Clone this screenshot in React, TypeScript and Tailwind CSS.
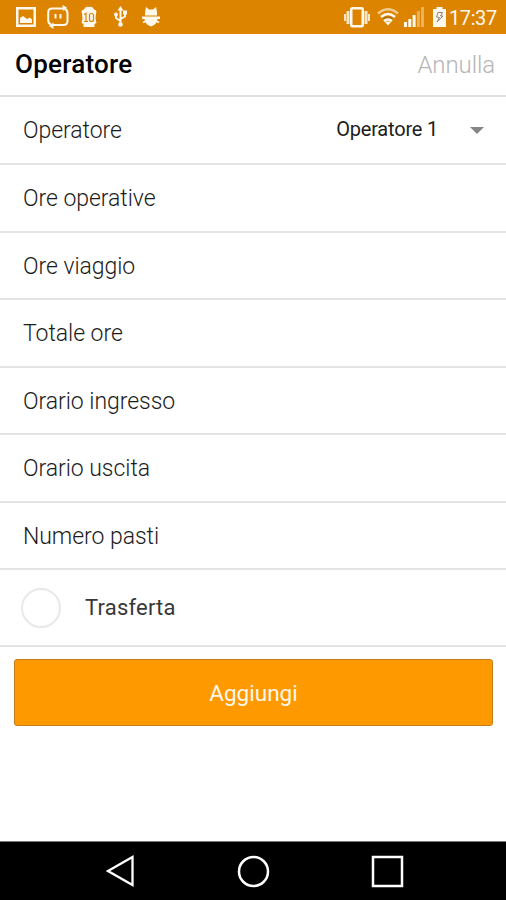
import React, { Component } from "react";

type Field = { id: string, label: string, height: string }

type OperatorFormState = {
    operator: string,
    trasferta: boolean
}

const FIELDS: Field[] = [
    { id: "oreOperative", label: "Ore operative", height: "h-[68px]" },
    { id: "oreViaggio", label: "Ore viaggio", height: "h-[67px]" },
    { id: "totaleOre", label: "Totale ore", height: "h-[68px]" },
    { id: "orarioIngresso", label: "Orario ingresso", height: "h-[67px]" },
    { id: "orarioUscita", label: "Orario uscita", height: "h-[68px]" },
    { id: "numeroPasti", label: "Numero pasti", height: "h-[67px]" },
];

const ROW = "flex shrink-0 items-center border-b-2 border-[#e4e4e4] pl-[23px]";
const LABEL = "pt-[3px] text-[23px] font-light tracking-[-0.050px] text-[#1c1c1c]";

function StatusBar() {
    return (
        <div className="flex h-[34px] shrink-0 items-center bg-[#dc8400] pr-[9px] pl-4 text-[#fff8ec]">
            <svg className="mr-[11px]" width="20" height="20" viewBox="0 0 20 20" fill="currentColor">
                <path fillRule="evenodd" d="M0 0h20v20H0zM2.500 2.500v15h15v-15z" />
                <path d="M4 16v-5l3-2 4 3 3-1.500 2 2V16z" />
            </svg>
            <svg className="mr-[12px]" width="22" height="24" viewBox="0 0 22 24" fill="none" stroke="currentColor" strokeWidth="2">
                <path d="M17 3.500H5.200q-4 0-4 4V15q0 3.500 3 5M5 20h11.500q4 0 4-4V8.500q0-3.500-3-5" />
                <path d="M15.500 0l4.500 2.500-4 3.500zM6.500 17.500L2 21l4.500 3z" fill="currentColor" stroke="none" />
                <path d="M8.500 9v4.500M13.500 9v4.500" />
            </svg>
            <svg className="mr-[17px]" width="16" height="22" viewBox="0 0 16 22">
                <path d="M1 7Q-.5 4 3 3.500 4 0 8 1q4-1 5 2.500 3.500.5 2 3.500l-.5 6 1 4-2 1v3H2.500v-3l-2-1 1-4z" fill="currentColor" />
                <path d="M3 8.500l2-1v8M3 15.500h4M8.500 9.500q0-2 2-2t2 2v4q0 2-2 2t-2-2z" fill="none" stroke="#dc8400" strokeWidth="1.200" />
            </svg>
            <svg className="mr-[15px]" width="13" height="22" viewBox="0 0 13 22" fill="none" stroke="currentColor" strokeWidth="2">
                <path d="M6.500 3v15M6.500 15L2 12V8.500M6.500 13L11 10.500V7" />
                <path d="M6.500 0l3 4.500h-6zM9 4.500h4v4H9z" fill="currentColor" stroke="none" />
                <circle cx="2" cy="8.500" r="2" fill="currentColor" stroke="none" />
                <circle cx="6.500" cy="18.500" r="2.300" fill="currentColor" stroke="none" />
            </svg>
            <svg width="18" height="20" viewBox="0 0 18 20" fill="currentColor">
                <path d="M3 8.500V5L4 0l3 2.500h4L14 0l1 5v3.500zM0 9.500h18V12h-2.500Q15 17.500 9 19.500 3 17.500 2.500 12H0z" />
                <path d="M1 15.500l3-1.500M17 15.500L14 14" stroke="currentColor" strokeWidth="1.800" />
            </svg>
            <svg className="ml-auto mr-[7px]" width="26" height="21" viewBox="0 0 26 21" fill="none" stroke="currentColor">
                <rect x="7.250" y="1.250" width="11.500" height="18" rx="1" strokeWidth="2.500" />
                <path d="M4 4v13M22 4v13" strokeWidth="3" opacity=".85" />
                <path d="M1 7v7M25 7v7" strokeWidth="2" opacity=".85" />
            </svg>
            <svg className="mr-[5px]" width="22" height="18" viewBox="0 0 22 18" fill="none" stroke="currentColor" strokeWidth="2.500">
                <path d="M1 5.500Q11-3 21 5.500" opacity=".6" />
                <path d="M4 9Q11 3 18 9" />
                <path d="M6.500 10.500Q11 7.500 15.500 10.500" stroke="#8a6430" strokeWidth="1.200" />
                <path d="M7 13Q11 10 15 13" />
                <path d="M11 17.500l-3.500-4h7z" fill="currentColor" stroke="none" />
            </svg>
            <svg className="mr-[9px]" width="20" height="20" viewBox="0 0 20 20" fill="currentColor">
                <path d="M0 15h3v5H0zM4.300 12h3v8h-3zM8.600 8h3v12h-3z" />
                <path d="M12.900 4h3v16h-3zM17 0h3v20h-3z" opacity=".4" />
            </svg>
            <svg className="mr-[3px]" width="13" height="20" viewBox="0 0 13 20">
                <path d="M0 2h3.500V0h6v2H13v18H0z" fill="currentColor" />
                <path d="M9.500 5.500H5L3.500 10l3 .5L4 15l6-6H7.500z" fill="none" stroke="#8c8377" strokeWidth="1" />
            </svg>
            <span className="mt-[2px] w-[48px] text-[20px] leading-none tracking-[-0.4px] whitespace-nowrap">17:37</span>
        </div>
    );
}

function NavigationBar() {
    return (
        <div className="flex h-[59px] shrink-0 items-center border-t border-[#777777] bg-black pl-[106px]">
            <svg width="29" height="32" viewBox="0 0 29 32" fill="none" stroke="white" strokeWidth="2.300">
                <path d="M2 16L26.500 2v28z" />
            </svg>
            <svg className="ml-[102px]" width="33" height="33" viewBox="0 0 33 33" fill="none" stroke="white" strokeWidth="2.500">
                <circle cx="16.500" cy="16.500" r="14.500" />
            </svg>
            <svg className="ml-[101px]" width="33" height="33" viewBox="0 0 33 33" fill="none" stroke="white" strokeWidth="2.500">
                <rect x="2" y="2" width="29" height="29" />
            </svg>
        </div>
    );
}

class OperatorForm extends Component<{}, OperatorFormState> {
    constructor(props: any) {
        super(props);
        this.state = {
            operator: "Operatore 1",
            trasferta: false
        };
        this.toggleTrasferta = this.toggleTrasferta.bind(this);
    }

    toggleTrasferta() {this.setState({trasferta: !this.state.trasferta})}

    render() {
        return (
            <main className="flex flex-1 flex-col bg-white">
                <header className="flex h-[63px] shrink-0 items-center justify-between border-b-2 border-[#dfdfdf] pr-[11px] pl-[15px]">
                    <h1 className="text-[26px] font-medium tracking-[0.250px] text-black">Operatore</h1>
                    <button className="text-[24px] font-light tracking-[-0.1px] text-[#b5b5b5]">Annulla</button>
                </header>
                <div className={`${ROW} h-[68px] pr-[22px]`}>
                    <span className={LABEL}>Operatore</span>
                    <button className="mb-[3px] ml-auto flex items-center text-[20px] tracking-[-0.2px] text-[#1c1c1c]">
                        {this.state.operator}
                        <svg className="mt-[3px] ml-[32px]" width="14" height="7" viewBox="0 0 14 7">
                            <path d="M0 0h14L7 7z" fill="#868686" />
                        </svg>
                    </button>
                </div>
                {FIELDS.map(field => (
                    <div key={field.id} className={`${ROW} ${field.height}`}>
                        <span className={LABEL}>{field.label}</span>
                    </div>
                ))}
                <div className={`${ROW} h-[77px]`}>
                    <button
                        onClick={this.toggleTrasferta}
                        className={this.state.trasferta
                            ? "-ml-[2px] size-[40px] rounded-full border-2 border-[#ff9900] bg-[#ff9900]"
                            : "-ml-[2px] size-[40px] rounded-full border-2 border-[#e8e8e8]"}
                    />
                    <span className="ml-[24px] text-[22px] tracking-[0.2px] text-[#383838]">Trasferta</span>
                </div>
                <button className="mr-[13px] ml-[14px] mt-[12px] h-[67px] shrink-0 rounded-[3px] border border-[#c67d1c] bg-[#ff9900] pt-[2px] text-[22.500px] text-[#fff8ec]">
                    Aggiungi
                </button>
            </main>
        );
    }
}

export default function App() {
    return (
        <div className="flex h-[900px] w-[506px] flex-col overflow-hidden font-['Roboto',sans-serif]">
            <StatusBar />
            <OperatorForm />
            <NavigationBar />
        </div>
    );
}
